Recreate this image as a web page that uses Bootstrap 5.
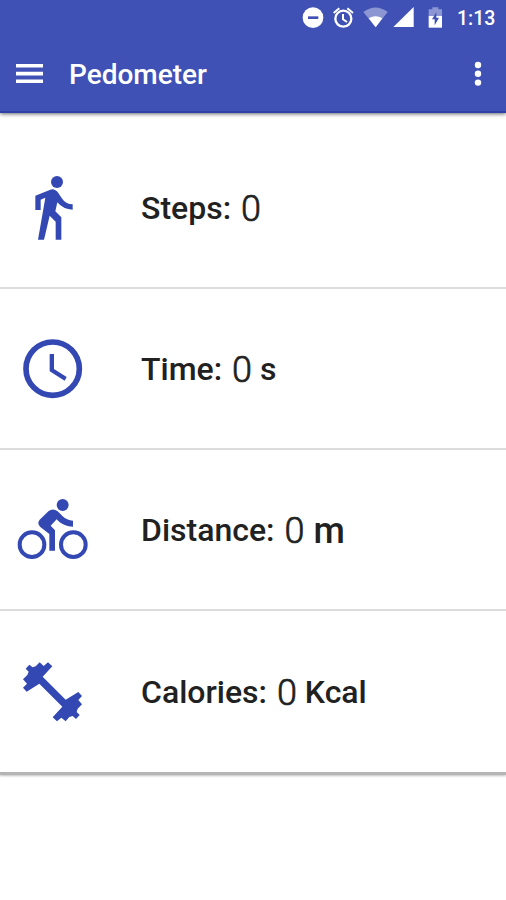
<!DOCTYPE html>
<html lang="en">
<head>
<meta charset="utf-8">
<meta name="viewport" content="width=device-width, initial-scale=1">
<title>Pedometer</title>
<link href="https://cdn.jsdelivr.net/npm/bootstrap@5.3.0/dist/css/bootstrap.min.css" rel="stylesheet">
<style>
body{font-family:Roboto,"Liberation Sans",sans-serif;background:#fff;color:#212121;min-height:900px;overflow:hidden}
.app-head{background:#3f51b5;height:113px;border-bottom:2px solid #3040a8;box-shadow:0 1px 4px rgba(0,0,0,.6)}
.status{height:36px;padding-right:10px}
.clock-text{font-size:19.5px;font-weight:500;line-height:36px;width:39px;padding-top:1px;white-space:nowrap}
.toolbar{height:75px;padding:0 20px 0 16px}
.app-title{font-size:28px;font-weight:500;line-height:32px;margin-left:26px;padding-top:2px}
.stats{padding-top:14px;border-bottom:3px solid #b5b5b5;box-shadow:0 1px 2px rgba(0,0,0,.25)}
.stat{height:161px;padding-left:10px;border-bottom:2px solid #dcdcdc}
.stat:first-child{height:162px}
.stat:last-child{border-bottom:0}
.stat svg{width:100px;height:90px;fill:#3348b2;stroke:none;flex:none}
.label-text{font-size:32px;font-weight:500;line-height:44px;margin-left:31px;padding-top:1px;white-space:pre}
.value{font-size:36px;font-weight:300;-webkit-text-stroke:.7px #212121;margin:0 0 0 2px;vertical-align:-2px;line-height:1}
.unit-lg{font-size:36px;line-height:1;vertical-align:-2px;margin-left:1px}
</style>
<script src="https://cdn.jsdelivr.net/npm/bootstrap@5.3.0/dist/js/bootstrap.bundle.min.js"></script>
</head>
<body>
<header class="app-head text-white position-relative">
  <div class="status d-flex justify-content-end align-items-center">
    <svg width="165" height="36" viewBox="6 0 495 108" fill="#fff">
      <circle cx="69" cy="53" r="31"/><path d="M54 49h31v8H54z" fill="#3f51b5"/>
      <circle cx="160" cy="56" r="24" fill="none" stroke="#fff" stroke-width="7"/>
      <path d="M131 39l17-14M189 39l-17-14M159 42v16l12 8" fill="none" stroke="#fff" stroke-width="6"/>
      <path d="M220 36q37-27 73 0l-36 46z" opacity=".4"/><path d="M236 55q21-13 41 0l-20 27z"/>
      <path d="M371 21v60h-61z"/>
      <path d="M416 28h11v-6h18v6h11v20h-40z" opacity=".4"/><path d="M416 48h40v35h-40z"/>
      <path d="M439 37l-13 21h8v18l13-23h-8z" fill="#3f51b5"/>
    </svg>
    <span class="clock-text">1:13</span>
  </div>
  <div class="toolbar d-flex align-items-center">
    <svg width="27" height="20" viewBox="0 0 27 20" fill="#fff" role="img" aria-label="Menu"><path d="M0 0h27v3.6H0zM0 7.8h27v3.6H0zM0 15.5h27v3.6H0z"/></svg>
    <span class="app-title">Pedometer</span>
    <svg class="ms-auto" width="16" height="26" viewBox="0 0 16 26" fill="#fff" role="img" aria-label="More"><circle cx="8" cy="4" r="3.2"/><circle cx="8" cy="12.8" r="3.2"/><circle cx="8" cy="21.6" r="3.2"/></svg>
  </div>
</header>
<main class="stats">
  <div class="stat d-flex align-items-center">
    <svg viewBox="0 -9 300 270"><circle cx="141" cy="51" r="18"/><path d="M76 92L121 74q13-4 24 10l10 15q12 19 33 19v16q-29-1-46-22l-6 27 18 18v67h-17v-54l-18-18-17 72H84L106 98 92 104v31H76z"/></svg>
    <div class="label-text">Steps: <span class="value">0</span></div>
  </div>
  <div class="stat d-flex align-items-center">
    <svg viewBox="0 -4 300 270"><circle cx="128" cy="130" r="80" fill="none" stroke="#3348b2" stroke-width="17"/><path d="M119 86h13v45l38 24-6 11-45-28z"/></svg>
    <div class="label-text">Time: <span class="value">0</span> s</div>
  </div>
  <div class="stat d-flex align-items-center">
    <svg viewBox="0 -1 300 270"><circle cx="158" cy="59" r="18"/><g fill="none" stroke="#3348b2" stroke-width="12"><circle cx="66" cy="178" r="37"/><circle cx="190" cy="178" r="37"/></g><path d="M89 103L116 77q13-10 27 1l15 15q12 12 31 13v18q-28-1-44-17l-5-5-18 19 13 14v61h-17v-50L91 125q-11-11-2-22z"/></svg>
    <div class="label-text">Distance: <span class="value">0</span> <span class="unit-lg">m</span></div>
  </div>
  <div class="stat d-flex align-items-center">
    <svg viewBox="0 2 300 270"><path d="M58 56L68 64 77 61 89 49 101 60 114 49 127 61 98 92 167 161 205 138 216 150 205 162 216 175 203 188 200 198 209 207 198 219 188 210 178 213 167 226 154 215 141 226 128 214 157 182 88 113 50 137 39 125 51 113 39 100 52 87 56 77 47 68z" transform="translate(0 -1)"/></svg>
    <div class="label-text">Calories: <span class="value">0</span> Kcal</div>
  </div>
</main>
</body>
</html>
